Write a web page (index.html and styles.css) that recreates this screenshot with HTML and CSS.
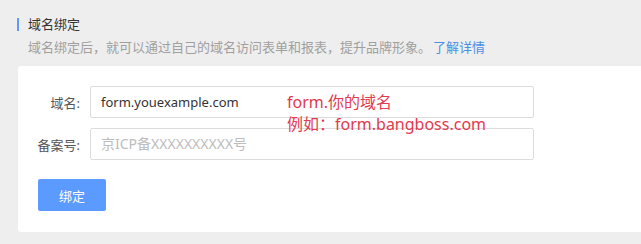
FILE: index.html
```html
<!DOCTYPE html>
<html lang="zh-CN">
<head>
<meta charset="utf-8">
<title>域名绑定</title>
<link rel="stylesheet" href="styles.css">
</head>
<body>
<div class="page">
  <div class="head">
    <div class="title">域名绑定</div>
    <div class="desc">域名绑定后，就可以通过自己的域名访问表单和报表，提升品牌形象。<a class="more" href="#">了解详情</a></div>
  </div>
  <div class="card">
    <div class="row">
      <label class="label">域名:</label>
      <div class="input">form.youexample.com</div>
    </div>
    <div class="row">
      <label class="label">备案号:</label>
      <div class="input placeholder">京ICP备XXXXXXXXXX号</div>
    </div>
    <div class="actions">
      <button class="btn">绑定</button>
    </div>
    <div class="note">form.你的域名<br>例如：form.bangboss.com</div>
  </div>
</div>
</body>
</html>
```
FILE: styles.css
```css
html, body {
  margin: 0;
  padding: 0;
  background: #eeeeee;
}
body {
  font-family: "Noto Sans", "Noto Sans CJK SC", sans-serif;
  color: #333;
}
.page {
  padding-top: 18px;
}
.head {
  padding-left: 17px;
}
.title {
  border-left: 2px solid #5b9aff;
  padding-left: 9px;
  font-size: 13px;
  line-height: 13px;
  color: #333;
}
.desc {
  margin-top: 8px;
  padding-left: 11px;
  font-size: 13px;
  line-height: 16px;
  color: #a0a0a0;
}
.more {
  color: #4a90e2;
  text-decoration: none;
  margin-left: 2px;
}
.card {
  position: relative;
  margin-top: 11px;
  margin-left: 18px;
  height: 166px;
  box-sizing: border-box;
  padding-top: 20px;
  background: #fff;
  border-radius: 3px 0 0 3px;
}
.row {
  display: flex;
  align-items: center;
  margin-bottom: 10px;
}
.label {
  width: 62px;
  text-align: right;
  font-size: 13px;
  color: #555;
  margin-right: 10px;
}
.input {
  width: 444px;
  height: 32px;
  box-sizing: border-box;
  border: 1px solid #dcdcdc;
  border-radius: 2px;
  padding-left: 10px;
  font-size: 13px;
  line-height: 30px;
  color: #333;
}
.placeholder {
  color: #bdbdbd;
  font-size: 14px;
}
.actions {
  padding-left: 20px;
  padding-top: 9px;
}
.btn {
  display: block;
  width: 68px;
  height: 32px;
  border: none;
  border-radius: 2px;
  background: #5b9aff;
  color: #fff;
  font-family: inherit;
  font-size: 13px;
}
.note {
  position: absolute;
  left: 269px;
  top: 25px;
  font-size: 16px;
  line-height: 22px;
  color: #e23a4e;
}
```
